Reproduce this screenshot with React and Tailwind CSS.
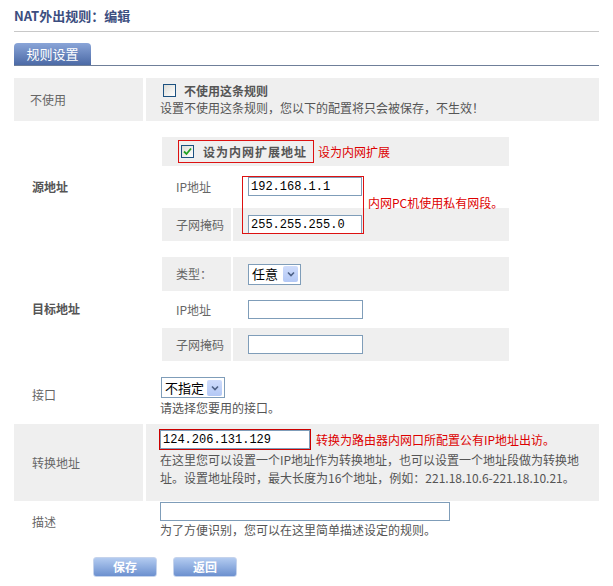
import React from "react";

const font = { fontFamily: '"Noto Sans CJK SC", "Liberation Sans", sans-serif' };

function CheckBox({ checked }) {
  return (
    <span className="inline-flex h-[13px] w-[13px] items-center justify-center border border-[#1c5180] bg-gradient-to-br from-[#dcdcd7] to-white">
      {checked && (
        <svg width="9" height="9" viewBox="0 0 9 9">
          <path d="M1 4.5 L3.5 7 L8 1.5" fill="none" stroke="#21a121" strokeWidth="1.8" />
        </svg>
      )}
    </span>
  );
}

function Select({ value, className }) {
  return (
    <div className={"flex h-[21px] items-center justify-between border border-[#7f9db9] bg-white pl-[3px] pr-[2px] text-[13px] text-black " + className}>
      <span>{value}</span>
      <span className="flex h-[16px] w-[15px] items-center justify-center rounded-[2px] bg-gradient-to-b from-[#cfdcfb] to-[#b3c8f5]">
        <svg width="8" height="6" viewBox="0 0 8 6">
          <path d="M1 1.5 L4 4.5 L7 1.5" fill="none" stroke="#4d6185" strokeWidth="1.6" />
        </svg>
      </span>
    </div>
  );
}

function TextInput({ value, className }) {
  return (
    <div className={"flex h-[19px] items-center border border-[#7f9db9] bg-white px-[2px] text-[12px] text-black " + className} style={{ fontFamily: '"Liberation Mono", monospace' }}>
      {value}
    </div>
  );
}

function SubRow({ label, gray, height, children }) {
  const bg = gray ? "bg-[#efefef]" : "bg-white";
  return (
    <div className={"flex gap-x-[2px] " + height}>
      <div className={"flex w-[69px] items-center pl-[14px] text-[#666] " + bg}>{label}</div>
      <div className={"flex flex-1 items-center pl-[15px] " + bg}>{children}</div>
    </div>
  );
}

function Button({ children }) {
  return (
    <button className="h-[20px] w-[64px] rounded-[3px] border border-[#c5d3ec] bg-gradient-to-b from-[#b3cbf0] to-[#6c90cf] text-[12px] font-bold text-white">
      {children}
    </button>
  );
}

export default function App() {
  return (
    <div className="h-[586px] w-[613px] bg-white px-[14px] text-[12px] text-[#555]" style={font}>
      <div className="h-[32px] border-b border-[#c8c8c8] pt-[6px] text-[13px] font-bold text-[#3c4e80]">
        NAT外出规则：编辑
      </div>

      <div className="mt-[11px] border-b border-[#6f7f99]">
        <div className="flex h-[22px] w-[77px] items-center justify-center rounded-t-[4px] bg-gradient-to-b from-[#8aa5d8] to-[#4c6aa6] text-[13px] text-white">
          规则设置
        </div>
      </div>

      <div className="mt-[12px] w-[585px]">
        {/* 不使用 */}
        <div className="flex h-[43px] gap-x-[3px]">
          <div className="flex w-[129px] items-center bg-[#efefef] pl-[16px] text-[#666]">不使用</div>
          <div className="flex flex-1 flex-col justify-center bg-[#efefef] pl-[14px] leading-[17px]">
            <div className="ml-[3px] flex h-[14px] items-center gap-x-[8px]">
              <CheckBox />
              <span className="font-bold text-[#555]">不使用这条规则</span>
            </div>
            <div className="mt-[1px]">设置不使用这条规则，您以下的配置将只会被保存，不生效！</div>
          </div>
        </div>

        {/* 源地址 */}
        <div className="mt-[3px] flex h-[126px] gap-x-[3px]">
          <div className="flex w-[129px] items-center pl-[18px] font-bold text-[#555]">源地址</div>
          <div className="flex-1 pl-[16px] pt-[13px]">
            <div className="w-[347px]">
              <div className="flex h-[29px] items-center bg-[#efefef] pl-[16px]">
                <div className="flex h-[23px] items-center gap-x-[9px] border border-[#d11] pl-[2px] pr-[6px]">
                  <CheckBox checked />
                  <span className="font-bold tracking-[1px]">设为内网扩展地址</span>
                </div>
                <span className="ml-[4px] text-[#d00]">设为内网扩展</span>
              </div>
              <div className="relative">
                <div className="mt-[1px]">
                  <SubRow label="IP地址" height="h-[39px]">
                    <TextInput value="192.168.1.1" className="w-[114px]" />
                  </SubRow>
                </div>
                <div className="mt-[2px]">
                  <SubRow label="子网掩码" gray height="h-[33px]">
                    <TextInput value="255.255.255.0" className="w-[114px]" />
                  </SubRow>
                </div>
                <div className="absolute left-[80px] top-[9px] h-[58px] w-[122px] border border-[#d11]" />
                <div className="absolute left-[206px] top-[27px] whitespace-nowrap text-[#d00]">内网PC机使用私有网段。</div>
              </div>
            </div>
          </div>
        </div>

        {/* 目标地址 */}
        <div className="flex h-[118px] gap-x-[3px]">
          <div className="flex w-[129px] items-center pl-[18px] font-bold text-[#555]">目标地址</div>
          <div className="flex-1 pl-[16px] pt-[7px]">
            <div className="flex w-[347px] flex-col gap-y-[2px]">
              <SubRow label="类型：" gray height="h-[34px]">
                <Select value="任意" className="w-[53px]" />
              </SubRow>
              <SubRow label="IP地址" height="h-[33px]">
                <TextInput value="" className="w-[115px]" />
              </SubRow>
              <SubRow label="子网掩码" gray height="h-[33px]">
                <TextInput value="" className="w-[115px]" />
              </SubRow>
            </div>
          </div>
        </div>

        {/* 接口 */}
        <div className="flex h-[53px] gap-x-[3px]">
          <div className="flex w-[129px] items-center pl-[18px] text-[#666]">接口</div>
          <div className="flex flex-1 flex-col pl-[14px] pt-[9px]">
            <Select value="不指定" className="ml-[1px] h-[20px] w-[64px]" />
            <div className="mt-[1px] leading-[18px]">请选择您要用的接口。</div>
          </div>
        </div>

        {/* 转换地址 */}
        <div className="mt-[3px] flex h-[77px] gap-x-[3px]">
          <div className="flex w-[129px] items-center bg-[#efefef] pl-[18px] text-[#666]">转换地址</div>
          <div className="flex-1 bg-[#efefef] pl-[14px] pt-[6px]">
            <div className="flex items-center">
              <TextInput value="124.206.131.129" className="w-[150px] outline outline-1 outline-[#c00]" />
              <span className="ml-[6px] text-[#d00]">转换为路由器内网口所配置公有IP地址出访。</span>
            </div>
            <div className="mt-[2px] leading-[18px]">
              在这里您可以设置一个IP地址作为转换地址，也可以设置一个地址段做为转换地
              <br />
              址。设置地址段时，最大长度为16个地址，例如：221.18.10.6-221.18.10.21。
            </div>
          </div>
        </div>

        {/* 描述 */}
        <div className="flex h-[40px] gap-x-[3px]">
          <div className="flex w-[129px] items-center pl-[18px] pt-[2px] text-[#666]">描述</div>
          <div className="flex-1 pl-[14px] pt-[1px]">
            <TextInput value="" className="w-[290px]" />
            <div className="leading-[18px]">为了方便识别，您可以在这里简单描述设定的规则。</div>
          </div>
        </div>

        <div className="mt-[16px] flex gap-x-[16px] pl-[79px]">
          <Button>保存</Button>
          <Button>返回</Button>
        </div>
      </div>
    </div>
  );
}
